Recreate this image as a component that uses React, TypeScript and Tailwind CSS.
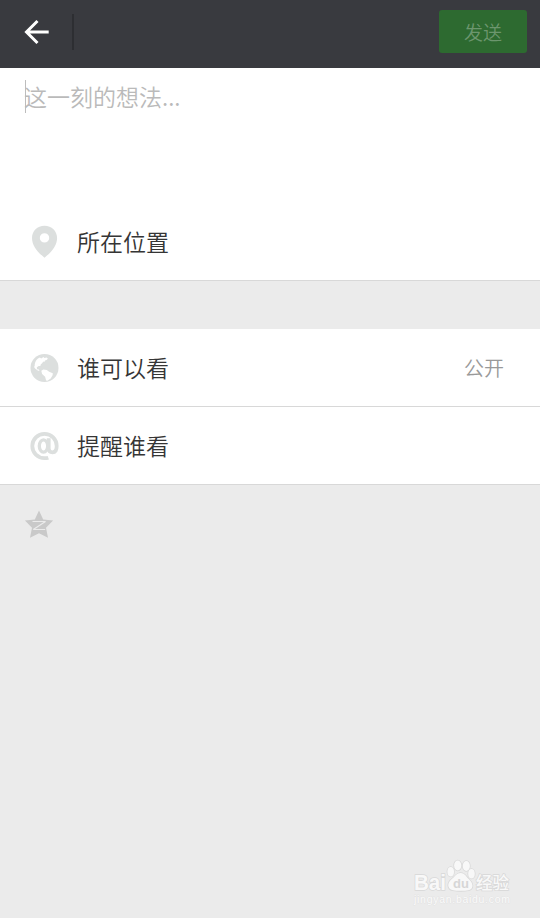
import React from 'react'

const PinIcon = () => (
  <svg className="-mt-px size-[42px]" viewBox="0 0 42 42">
    <path
      fill="#dcdfde"
      fillRule="evenodd"
      d="M20.500 5.700C13.300 5.700 8 11 8 17.900c0 6.900 4.600 13.400 12.500 19.800 7.900-6.400 12.600-12.900 12.600-19.800C33.100 11 27.700 5.700 20.500 5.700zm0 7.500a4.700 4.700 0 1 1 0 9.400 4.700 4.700 0 0 1 0-9.400z"
    />
  </svg>
)

const GlobeIcon = () => (
  <svg className="mt-[3px] size-[42px]" viewBox="0 0 42 42">
    <circle cx="20.500" cy="20" r="14" fill="#dcdfde" />
    <path
      fill="#fff"
      d="M10.700 17.800c-.2-2.400.9-5.400 3.300-7.300l1.900-1 1.300.9 2.300-1.400.9.900 2.300-.5 1.200 1.300-1.300 1.400-1.600.4-.7 1.500-1.100-.5-.9 1.400-1.600 1.500-.3 1.500-1.700.2-1.900 1.200.2 1.900 1.800.4.700 1.300-1.800-.4-2.600-2-1-1.600z"
    />
    <path fill="#fff" d="m17.300 22.700 2-1.100 3.500.3 2.300 1.900 3.700 1.400-.2 2-1.900 3.300-3.300 2.300-1.300-.3-1-3.700-3-2.900z" />
  </svg>
)

const AtIcon = () => (
  <svg className="mt-[3px] size-[42px]" viewBox="0 0 42 42" fill="none" stroke="#dcdfde">
    <path strokeWidth="3.800" d="M24.300 31.700c-1.100.4-2.400.5-3.800.5A12.200 12.200 0 1 1 32.700 20c0 4-1.200 6.300-4.200 6.300-2.600 0-3.800-1.500-3.800-3.800V12.300" />
    <ellipse cx="19.500" cy="20" rx="4.200" ry="6.200" strokeWidth="3.300" />
  </svg>
)

const QzoneIcon = () => (
  <svg className="size-[42px]" viewBox="0 0 42 42">
    <path fill="#c9c9c9" d="M21 6.500l4.200 8.900 9.900 1L28 23.800l2 9.900-9-4.500-9 4.500 2-9.900-7.100-7.400 9.900-1z" />
    <path
      fill="none"
      stroke="#ebebeb"
      strokeWidth="1.200"
      strokeLinejoin="bevel"
      d="M14.500 17.500h13L15.300 25.500h11.900"
    />
  </svg>
)

type RowProps = {
  icon: React.ReactNode
  label: string
  value?: string
}

const Row = ({ icon, label, value }: RowProps) => (
  <div className="flex h-[78px] items-center border-b border-[#d8d8d8] bg-white pr-9 pl-6">
    {icon}
    <span className="-mt-0.5 ml-[11px] flex-1 text-[23px] leading-8 text-[#353535]">{label}</span>
    {value && <span className="text-[20px] leading-8 text-[#999]">{value}</span>}
  </div>
)

const Header = () => (
  <header className="flex h-[68px] items-start bg-[#393a3f] pr-[13px] pl-6">
    <svg className="mt-[19px] h-[26px] w-[26px]" viewBox="0 0 26 26" fill="none" stroke="#fff" strokeWidth="3">
      <path d="M24.700 13H3M13.500 2 2.500 13l11 11" />
    </svg>
    <div className="mt-3.5 ml-[22px] h-9 w-0.5 bg-[#2d2e32]" />
    <button className="mt-2.5 ml-auto h-[43px] w-[88px] rounded-[3px] bg-[#2d6a30] pt-0.5 text-[19px] text-[#6c966e]">
      发送
    </button>
  </header>
)

const Watermark = () => (
  <svg
    className="absolute right-[26px] bottom-2 h-[54px] w-[102px]"
    viewBox="0 0 102 54"
    fill="#f8f8f8"
    stroke="#d8d8d8"
    strokeWidth="1.500"
    paintOrder="stroke"
    fontFamily="'Liberation Sans', 'Noto Sans CJK SC', sans-serif"
    fontWeight="700"
  >
    <text x="2" y="33.500" fontSize="22" textLength="32" lengthAdjust="spacingAndGlyphs">Bai</text>
    <ellipse cx="38.700" cy="15.700" rx="3.300" ry="4.700" />
    <ellipse cx="45.700" cy="9.500" rx="3.600" ry="4.900" />
    <ellipse cx="54.300" cy="10" rx="3.600" ry="4.900" />
    <ellipse cx="59.500" cy="17.700" rx="3.300" ry="4.700" />
    <path d="M48.700 17c3.800 0 5.300 3.500 8.300 6.300 4 3.500 5.500 9.700-.5 11-4 .7-11.500.7-15.500 0-6.300-1.300-5.800-7.500-1.500-11 3.500-2.800 5.200-6.300 9.200-6.300z" />
    <text x="41" y="32" fontSize="13" fill="#d6d6d6" stroke="none">du</text>
    <text x="64" y="33" fontSize="16.500" fontWeight="500" textLength="33" lengthAdjust="spacingAndGlyphs">经验</text>
    <text x="2" y="47" fontSize="10.500" fontWeight="400" fill="#fbfbfb" stroke="#dedede" strokeWidth=".7" textLength="96">jingyan.baidu.com</text>
  </svg>
)

const App = () => (
  <div className="relative flex h-screen flex-col overflow-hidden bg-[#ebebeb] font-['Noto_Sans_CJK_SC',sans-serif] font-[350]">
    <Header />
    <div className="h-[135px] bg-white pt-3 pl-[25px]">
      <div className="flex h-[33px] items-center border-l border-[#bdbdbd]">
        <span className="-mt-0.5 -ml-0.5 text-[23px] leading-8 text-[#bababa]">这一刻的想法...</span>
      </div>
    </div>
    <Row icon={<PinIcon />} label="所在位置" />
    <div className="mt-12">
      <Row icon={<GlobeIcon />} label="谁可以看" value="公开" />
      <Row icon={<AtIcon />} label="提醒谁看" />
    </div>
    <div className="px-[18px] pt-[19px]">
      <QzoneIcon />
    </div>
    <Watermark />
  </div>
)

export default App
